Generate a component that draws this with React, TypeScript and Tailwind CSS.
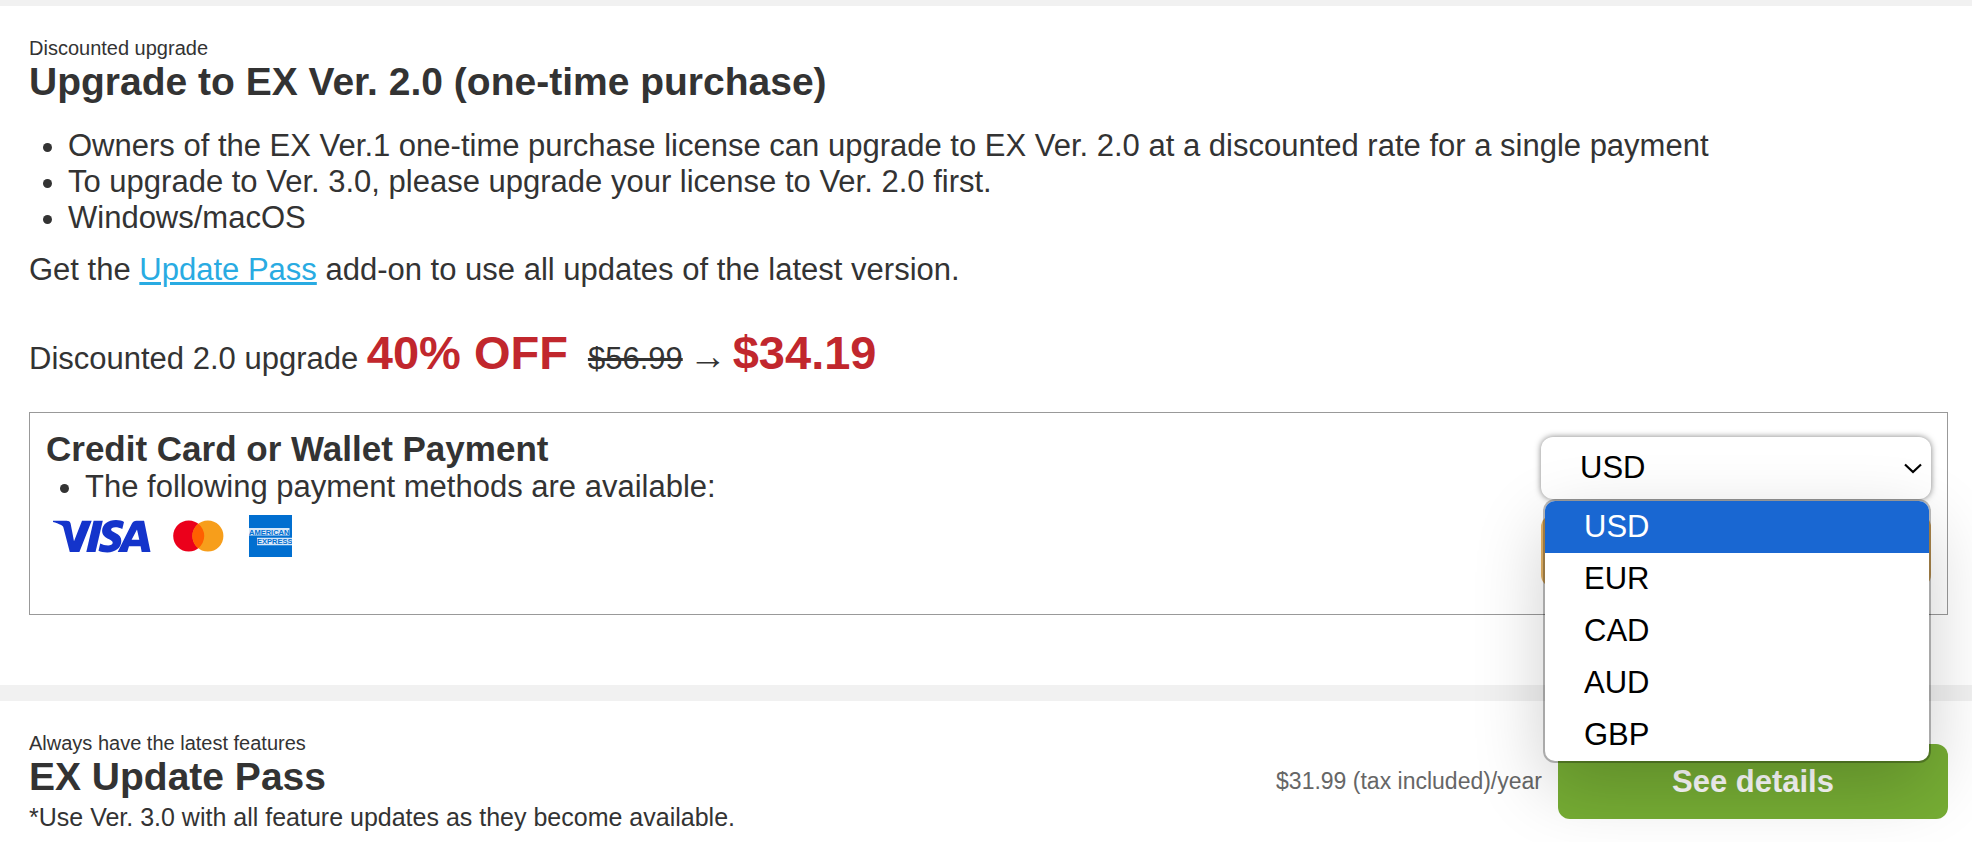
import { useState } from "react";

const currencies = ["USD", "EUR", "CAD", "AUD", "GBP"];

function VisaLogo() {
  return (
    <svg role="img" aria-label="Visa" width="98" height="33" viewBox="0 0 98 33" fill="#1434cb">
      <path d="M0 .7h13.600c2 0 3.500.7 4 2.800L21 21.300 29 .7h9.700L26.400 32H16.800L10.600 8.200C10.200 6.500 9.700 5.900 8.200 5 5.900 3.700 2.500 2.500 0 1.900z" />
      <path d="M40.600.7h9.200L42.500 32h-9.200z" />
      <path d="M71 1.900 69.300 9C67 7.900 64.600 7.300 62.300 7.300c-2.700 0-4.200 1-4.200 2.300 0 1.400 1.800 2.100 4.300 3.400 4 1.900 6 4.300 5.900 8.100C68.200 28 62.300 32.500 54.300 32.500c-3.500 0-6.800-.7-8.800-1.700l1.700-7.300c2.400 1.200 5 2 7.900 2 2.400 0 4.600-.9 4.600-2.700 0-1.300-1-2.100-4.100-3.700-3-1.500-6.600-3.900-6.500-8.300C49.200 4.500 55 0 63 0c3.200 0 6 .7 8 1.900z" />
      <path fillRule="evenodd" d="M83.500.7h7.600L97.500 32h-8.800l-1.100-5.700H76L74.200 32h-9.500L78.800 3.700C79.800 1.700 81.300.7 83.500.7zM84 9.500 78.600 19.800h7.700z" />
    </svg>
  );
}

function MastercardLogo() {
  return (
    <svg role="img" aria-label="Mastercard" width="51" height="32" viewBox="0 0 51 32">
      <circle cx="15.700" cy="16" r="15.500" fill="#eb001b" />
      <circle cx="34.900" cy="16" r="15.500" fill="#f79e1b" />
      <path d="M25.300 3.800a15.500 15.500 0 0 1 0 24.400 15.500 15.500 0 0 1 0-24.400z" fill="#ff5f00" />
    </svg>
  );
}

function AmexLogo() {
  return (
    <svg role="img" aria-label="American Express" width="43" height="42" viewBox="0 0 43 42">
      <rect width="43" height="42" fill="#016fd0" />
      <path d="M0 13h40.500v7.500H0zM8 22.700h35v7.500H8z" fill="#d7e8f8" />
      <g fill="#016fd0" fontFamily="Liberation Sans, sans-serif" fontWeight="700" fontSize="7.500">
        <text x="0" y="19.500">AMERICAN</text>
        <text x="8" y="29.200">EXPRESS</text>
      </g>
    </svg>
  );
}

function CurrencySelect() {
  const [currency, setCurrency] = useState("USD");
  return (
    <div className="relative">
      <select
        aria-label="Currency"
        value={currency}
        onChange={(e) => setCurrency(e.target.value)}
        className="block h-[62px] w-full appearance-none rounded-xl bg-white pl-[39px] text-[31px] text-black shadow-[0_0_6px_rgba(0,0,0,0.5)]"
      >
        {currencies.map((c) => (
          <option key={c}>{c}</option>
        ))}
      </select>
      <svg
        className="pointer-events-none absolute top-[26px] right-2 h-3 w-5"
        viewBox="0 0 20 12"
        fill="none"
        stroke="#000"
        strokeWidth="2.200"
        aria-hidden="true"
      >
        <path d="M2 1.500l8 7.500 8-7.500" />
      </svg>
      <ul
        role="listbox"
        aria-label="Currency options"
        className="absolute top-16 right-[2px] left-1 z-10 overflow-hidden rounded-[10px] bg-white text-[31px] leading-[52px] text-black shadow-[0_0_0_2px_rgba(0,0,0,0.27),0_24px_72px_rgba(0,0,0,0.2)]"
      >
        {currencies.map((c) => (
          <li
            key={c}
            role="option"
            aria-selected={c === currency}
            onClick={() => setCurrency(c)}
            className={c === currency ? "bg-[#1967d2] pl-[39px] text-white" : "pl-[39px]"}
          >
            {c}
          </li>
        ))}
      </ul>
    </div>
  );
}

export default function App() {
  return (
    <main className="overflow-hidden bg-white font-['Liberation_Sans',Arial,sans-serif] text-[31px] leading-9 text-[#333]">
      <section className="border-t-[6px] border-[#f1f1f1] pt-[30px] pr-6 pb-[70px] pl-[29px]">
        <p className="text-[20px] leading-6">Discounted upgrade</p>
        <h2 className="text-[39px] leading-[44px] font-bold">Upgrade to EX Ver. 2.0 (one-time purchase)</h2>
        <ul className="mt-6 list-disc pl-[39px]">
          <li>Owners of the EX Ver.1 one-time purchase license can upgrade to EX Ver. 2.0 at a discounted rate for a single payment</li>
          <li>To upgrade to Ver. 3.0, please upgrade your license to Ver. 2.0 first.</li>
          <li>Windows/macOS</li>
        </ul>
        <p className="mt-4">
          Get the{" "}
          <a href="#update-pass" className="text-[#29abe2] underline decoration-[3px]">
            Update Pass
          </a>{" "}
          add-on to use all updates of the latest version.
        </p>
        <p className="mt-9 leading-[58px]">
          Discounted 2.0 upgrade <strong className="text-[47px] text-[#c1272d]">40% OFF</strong>
          <s className="ml-5 decoration-[3px]">$56.99</s>
          <span className="mx-[6px] font-['Liberation_Serif',serif] text-[38px] leading-none">→</span>
          <strong className="text-[47px] text-[#c1272d]">$34.19</strong>
        </p>

        <div className="mt-6 flex h-[203px] justify-between border border-[#999] p-4 pt-6">
          <div className="-mt-[7px]">
            <h3 className="text-[35px] leading-[38px] font-bold">Credit Card or Wallet Payment</h3>
            <ul className="mt-px list-disc pl-[39px]">
              <li>The following payment methods are available:</li>
            </ul>
            <div className="mt-[10px] flex items-center pl-[7px]">
              <VisaLogo />
              <span className="ml-[22px]">
                <MastercardLogo />
              </span>
              <span className="ml-[25px]">
                <AmexLogo />
              </span>
            </div>
          </div>
          <div className="w-[390px]">
            <CurrencySelect />
            <button type="button" aria-label="Buy now" className="mt-4 block h-[72px] w-full rounded-xl bg-[#e3b264]" />
          </div>
        </div>
      </section>

      <section className="flex items-start justify-between border-t-[16px] border-[#f1f1f1] pt-[30px] pr-6 pb-2 pl-[29px]">
        <div>
          <p className="text-[20px] leading-6">Always have the latest features</p>
          <h2 className="text-[39px] leading-[44px] font-bold">EX Update Pass</h2>
          <p className="text-[25px] leading-9">*Use Ver. 3.0 with all feature updates as they become available.</p>
        </div>
        <div className="mt-[13px] flex items-center gap-4">
          <span className="text-[23px] leading-[75px] text-[#666]">$31.99 (tax included)/year</span>
          <a
            href="#details"
            className="w-[390px] rounded-xl bg-[#76ad34] text-center text-[31px] leading-[75px] font-bold text-white"
          >
            See details
          </a>
        </div>
      </section>
    </main>
  );
}
